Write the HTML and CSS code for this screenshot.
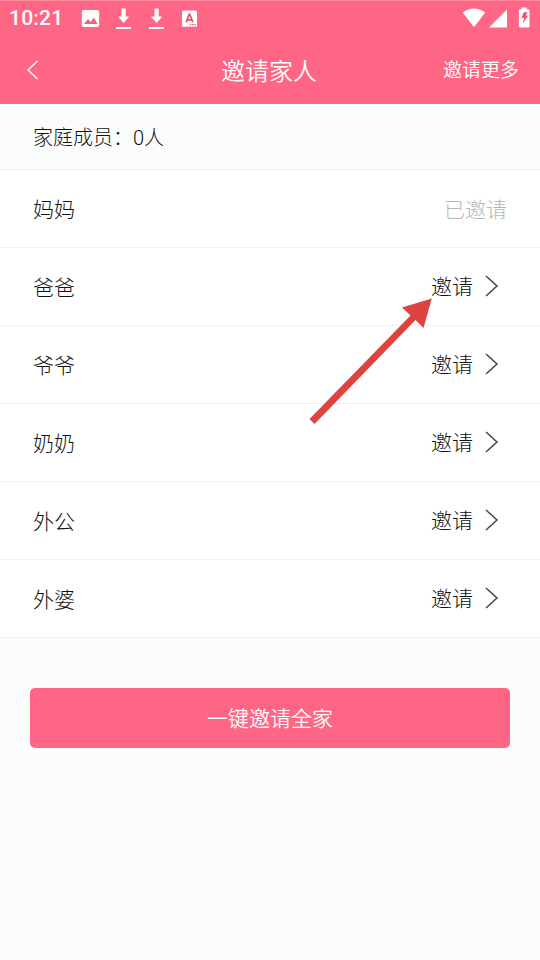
FILE: index.html
```html
<!DOCTYPE html>
<html lang="zh-CN">
<head>
<meta charset="utf-8">
<title>邀请家人</title>
<link rel="stylesheet" href="styles.css">
</head>
<body>
<div class="screen">
  <header class="header">
    <div class="status">
      <span class="time">10:21</span>
      <svg class="status-left" width="118" height="24" viewBox="80 6 118 24">
        <rect x="81.800" y="10" width="17.400" height="17" rx="2" fill="#fff"/>
        <path d="M84 24l4-5 2.500 3 3.500-4.500 3.500 6.500z" fill="#fa5f80"/>
        <g fill="#fff">
          <path d="M121.500 8.500h4.200v8h3.500l-5.600 6.500-5.600-6.500h3.500zM116 27h15v2h-15z"/>
          <path d="M154.500 8.500h4.200v8h3.500l-5.600 6.500-5.600-6.500h3.500zM149 27h15v2h-15z"/>
          <rect x="182" y="10.500" width="15" height="16.300" rx="1.500"/>
        </g>
        <path d="M186.200 22.300l3-8h.6l3 8M187.300 19.800h4.400" fill="none" stroke="#e2506e" stroke-width="1.700"/>
        <path d="M190 24h1.300v1.200H190zM192.200 24h1.300v1.200h-1.300zM194.400 24h1.300v1.200h-1.300z" fill="#e2506e"/>
      </svg>
      <svg class="status-right" width="70" height="24" viewBox="462 6 70 24">
        <g fill="#fff">
          <path d="M462.700 12.500Q474 4.500 485.200 12.500L475 26q-1 1-2 0z"/>
          <path d="M507 9.500v18h-18z"/>
          <path d="M521.700 7.500h5v1.800h1.500q1.300 0 1.300 1.300v15.600q0 1.300-1.300 1.300h-8q-1.300 0-1.300-1.300V10.600q0-1.300 1.300-1.300h1.500z"/>
        </g>
        <path d="M523.500 12.200h4l-1.700 3.600h2.200l-5.300 8 1.300-5.800h-2.300z" fill="#ee5474"/>
      </svg>
    </div>
    <div class="nav">
      <svg class="back" width="12" height="20" viewBox="0 0 12 20"><path d="M10.500 1L1 10l9.500 9" fill="none" stroke="#fff" stroke-width="1.400"/></svg>
      <h1 class="title">邀请家人</h1>
      <span class="more">邀请更多</span>
    </div>
  </header>
  <div class="summary">家庭成员：<span class="count">0</span>人</div>
  <ul class="members">
    <li class="row"><span>妈妈</span><span class="invited">已邀请</span></li>
    <li class="row"><span>爸爸</span><span class="invite"><span class="label">邀请</span><svg class="chevron" width="14" height="22" viewBox="0 0 14 22"><path d="M1 1l11 10L1 21"/></svg></span></li>
    <li class="row"><span>爷爷</span><span class="invite"><span class="label">邀请</span><svg class="chevron" width="14" height="22" viewBox="0 0 14 22"><path d="M1 1l11 10L1 21"/></svg></span></li>
    <li class="row"><span>奶奶</span><span class="invite"><span class="label">邀请</span><svg class="chevron" width="14" height="22" viewBox="0 0 14 22"><path d="M1 1l11 10L1 21"/></svg></span></li>
    <li class="row"><span>外公</span><span class="invite"><span class="label">邀请</span><svg class="chevron" width="14" height="22" viewBox="0 0 14 22"><path d="M1 1l11 10L1 21"/></svg></span></li>
    <li class="row"><span>外婆</span><span class="invite"><span class="label">邀请</span><svg class="chevron" width="14" height="22" viewBox="0 0 14 22"><path d="M1 1l11 10L1 21"/></svg></span></li>
  </ul>
  <button class="invite-all">一键邀请全家</button>
  <svg class="pointer" width="124" height="128" viewBox="308 297 124 128">
    <path d="M431.800 298.500L402 307.500L410.500 315.500L309.500 419L314.500 424L415.500 320L423.500 328Z" fill="#dd433f"/>
  </svg>
</div>
</body>
</html>
```
FILE: styles.css
```css
* {
  box-sizing: border-box;
}

body {
  margin: 0;
  font-family: "Noto Sans CJK SC", sans-serif;
  font-weight: 300;
  color: #111;
}

.screen {
  position: relative;
  width: 540px;
  height: 960px;
  background: #fbfdfc;
  overflow: hidden;
}

.header {
  height: 104px;
  background: #ff6685;
  border-top: 1px solid #ff8ba0;
  color: #fff;
  font-weight: 350;
}

.status {
  display: flex;
  align-items: center;
  height: 35px;
  padding: 0 8px 2px 9px;
}

.time {
  width: 71px;
  padding-top: 2px;
  font: 500 21px/35px Roboto, sans-serif;
  letter-spacing: 0.2px;
}

.status-right {
  margin-left: auto;
}

.nav {
  display: grid;
  grid-template-columns: 1fr auto 1fr;
  align-items: center;
  height: 68px;
  padding: 0 21px 0 27px;
}

.back {
  margin-bottom: 1px;
}

.title {
  margin: 0 0 0 -8px;
  font-size: 24px;
  font-weight: 350;
  line-height: 36px;
}

.more {
  justify-self: end;
  padding-bottom: 3px;
  font-size: 19px;
}

.summary {
  height: 66px;
  padding-left: 33px;
  border-bottom: 1px solid #edf1f0;
  font-size: 20px;
  line-height: 65px;
}

.count {
  font-family: Roboto, sans-serif;
}

.members {
  margin: 0;
  padding: 0;
  list-style: none;
  background: #fff;
}

.row {
  display: flex;
  align-items: center;
  justify-content: space-between;
  height: 78px;
  padding: 0 33px 2px;
  border-bottom: 1px solid #f0f2f1;
  font-size: 21px;
}

.invited {
  color: #b5b7b6;
}

.invite {
  display: flex;
  align-items: center;
  gap: 12px;
  padding-right: 8px;
}

.label {
  padding-bottom: 2px;
}

.chevron {
  fill: none;
  stroke: #444;
  stroke-width: 1.5;
}

.invite-all {
  display: block;
  width: 480px;
  height: 60px;
  margin: 50px auto 0;
  padding: 0 0 2px;
  border: 0;
  border-radius: 5px;
  background: #ff6685;
  color: #fff;
  font: inherit;
  font-size: 21px;
  font-weight: 350;
}

.pointer {
  position: absolute;
  left: 308px;
  top: 297px;
}
```
